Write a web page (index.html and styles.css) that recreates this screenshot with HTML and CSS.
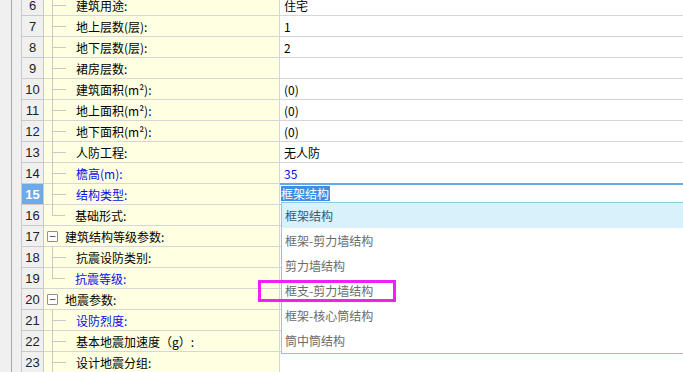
FILE: index.html
```html
<!DOCTYPE html>
<html>
<head>
<meta charset="utf-8">
<link rel="stylesheet" href="styles.css">
</head>
<body>
<div class="page">
  <div class="gutter"><div class="gline"></div></div>
  <div class="grid">
    <div class="row"><div class="num">6</div><div class="name"><span class="branch"></span><span class="label">建筑用途:</span></div><div class="val">住宅</div></div>
    <div class="row"><div class="num">7</div><div class="name"><span class="branch"></span><span class="label">地上层数(层):</span></div><div class="val">1</div></div>
    <div class="row"><div class="num">8</div><div class="name"><span class="branch"></span><span class="label">地下层数(层):</span></div><div class="val">2</div></div>
    <div class="row"><div class="num">9</div><div class="name"><span class="branch"></span><span class="label">裙房层数:</span></div><div class="val"></div></div>
    <div class="row"><div class="num">10</div><div class="name"><span class="branch"></span><span class="label">建筑面积(m²):</span></div><div class="val">(0)</div></div>
    <div class="row"><div class="num">11</div><div class="name"><span class="branch"></span><span class="label">地上面积(m²):</span></div><div class="val">(0)</div></div>
    <div class="row"><div class="num">12</div><div class="name"><span class="branch"></span><span class="label">地下面积(m²):</span></div><div class="val">(0)</div></div>
    <div class="row"><div class="num">13</div><div class="name"><span class="branch"></span><span class="label">人防工程:</span></div><div class="val">无人防</div></div>
    <div class="row"><div class="num">14</div><div class="name"><span class="branch"></span><span class="label blue">檐高(m):</span></div><div class="val blue">35</div></div>
    <div class="row"><div class="num active">15</div><div class="name"><span class="branch"></span><span class="label blue">结构类型:</span></div>
      <div class="val editing"><span class="sel">框架结构</span>
        <div class="dropdown">
          <div class="opt hot">框架结构</div>
          <div class="opt">框架-剪力墙结构</div>
          <div class="opt">剪力墙结构</div>
          <div class="opt">框支-剪力墙结构</div>
          <div class="opt">框架-核心筒结构</div>
          <div class="opt">筒中筒结构</div>
        </div>
      </div>
    </div>
    <div class="row"><div class="num">16</div><div class="name"><span class="branch last"></span><span class="label">基础形式:</span></div><div class="val"></div></div>
    <div class="row"><div class="num">17</div><div class="name group"><span class="toggle">−</span><span class="glabel">建筑结构等级参数:</span></div><div class="val"></div></div>
    <div class="row"><div class="num">18</div><div class="name"><span class="branch"></span><span class="label">抗震设防类别:</span></div><div class="val"></div></div>
    <div class="row"><div class="num">19</div><div class="name"><span class="branch last"></span><span class="label blue">抗震等级:</span></div><div class="val"></div></div>
    <div class="row"><div class="num">20</div><div class="name group"><span class="toggle">−</span><span class="glabel">地震参数:</span></div><div class="val"></div></div>
    <div class="row"><div class="num">21</div><div class="name"><span class="branch"></span><span class="label blue">设防烈度:</span></div><div class="val"></div></div>
    <div class="row"><div class="num">22</div><div class="name"><span class="branch"></span><span class="label">基本地震加速度（g）:</span></div><div class="val"></div></div>
    <div class="row"><div class="num">23</div><div class="name"><span class="branch"></span><span class="label">设计地震分组:</span></div><div class="val"></div></div>
  </div>
  <div class="mark"></div>
</div>
</body>
</html>
```

FILE: styles.css
```css
html, body {
  margin: 0;
  padding: 0;
  overflow: hidden;
  background: #ffffff;
}
body {
  font-family: "Noto Sans CJK SC", "Microsoft YaHei", sans-serif;
  font-size: 12px;
  color: #000;
}
.page {
  position: relative;
  display: flex;
  width: 683px;
  height: 372px;
  overflow: hidden;
}
.gutter {
  width: 21px;
  flex: none;
  background: #f0f0f0;
  display: flex;
  padding-left: 11px;
  box-sizing: border-box;
}
.gline {
  width: 1px;
  background: #a9a9a9;
}
.grid {
  flex: 1;
  margin-top: -5px;
  border-left: 1px solid #c9c9c9;
}
.row {
  display: grid;
  grid-template-columns: 22px 236px 1fr;
  height: 21px;
  border-bottom: 1px solid #d6d6d6;
  box-sizing: border-box;
}
.num {
  background: #f0f0f0;
  border-right: 1px solid #c9c9c9;
  font-family: "Liberation Sans", Arial, sans-serif;
  font-size: 13px;
  color: #222;
  display: flex;
  align-items: center;
  justify-content: center;
  margin-bottom: -1px;
  border-bottom: 1px solid #c9c9c9;
}
.num.active {
  background: #6eaaea;
  color: #fff;
  font-weight: bold;
}
.name {
  background: #ffffe1;
  border-right: 1px solid #d6d6d6;
  display: flex;
  align-items: center;
  padding-left: 8px;
  margin-bottom: -1px;
  border-bottom: 1px solid #d6d6d6;
}
.branch {
  position: relative;
  align-self: stretch;
  width: 13px;
  flex: none;
  border-left: 1px solid #c8c8c8;
  margin-top: -1px;
  margin-bottom: -1px;
}
.branch::after {
  content: "";
  position: absolute;
  left: 0;
  top: 50%;
  width: 13px;
  height: 1px;
  background: #c8c8c8;
}
.branch.last {
  border-left: none;
}
.branch.last::before {
  content: "";
  position: absolute;
  left: 0;
  top: 0;
  width: 1px;
  height: 50%;
  background: #c8c8c8;
}
.label {
  margin-left: 10px;
  white-space: nowrap;
}
.group {
  padding-left: 3px;
}
.toggle {
  width: 9px;
  height: 9px;
  border: 1px solid #8f8f8f;
  border-radius: 1px;
  background: #fff;
  font-family: "DejaVu Sans", sans-serif;
  font-size: 9px;
  line-height: 9px;
  text-align: center;
  color: #333;
  flex: none;
}
.glabel {
  margin-left: 7px;
  white-space: nowrap;
}
.blue {
  color: #0b0bf0;
}
.val {
  position: relative;
  display: flex;
  align-items: center;
  padding-left: 4px;
  white-space: nowrap;
}
.val.editing {
  padding-left: 1px;
  border-top: 2px solid #6aa8e4;
  margin-top: -1px;
  align-items: flex-start;
  padding-top: 1px;
}
.sel {
  background: #3d8fe6;
  color: #fff;
  height: 15px;
  line-height: 15px;
  padding-right: 1px;
}
.dropdown {
  position: absolute;
  left: 1px;
  top: 17px;
  right: -10px;
  border: 1px solid #8fc7df;
  background: #fff;
  z-index: 2;
}
.opt {
  height: 25px;
  line-height: 25px;
  padding-left: 3px;
  color: #6a6a6a;
}
.opt.hot {
  background: #d8f1fa;
  color: #2f5b80;
}
.mark {
  position: absolute;
  left: 258px;
  top: 280px;
  width: 138px;
  height: 22px;
  box-sizing: border-box;
  border: 3px solid #f21ff2;
  z-index: 3;
}
```
